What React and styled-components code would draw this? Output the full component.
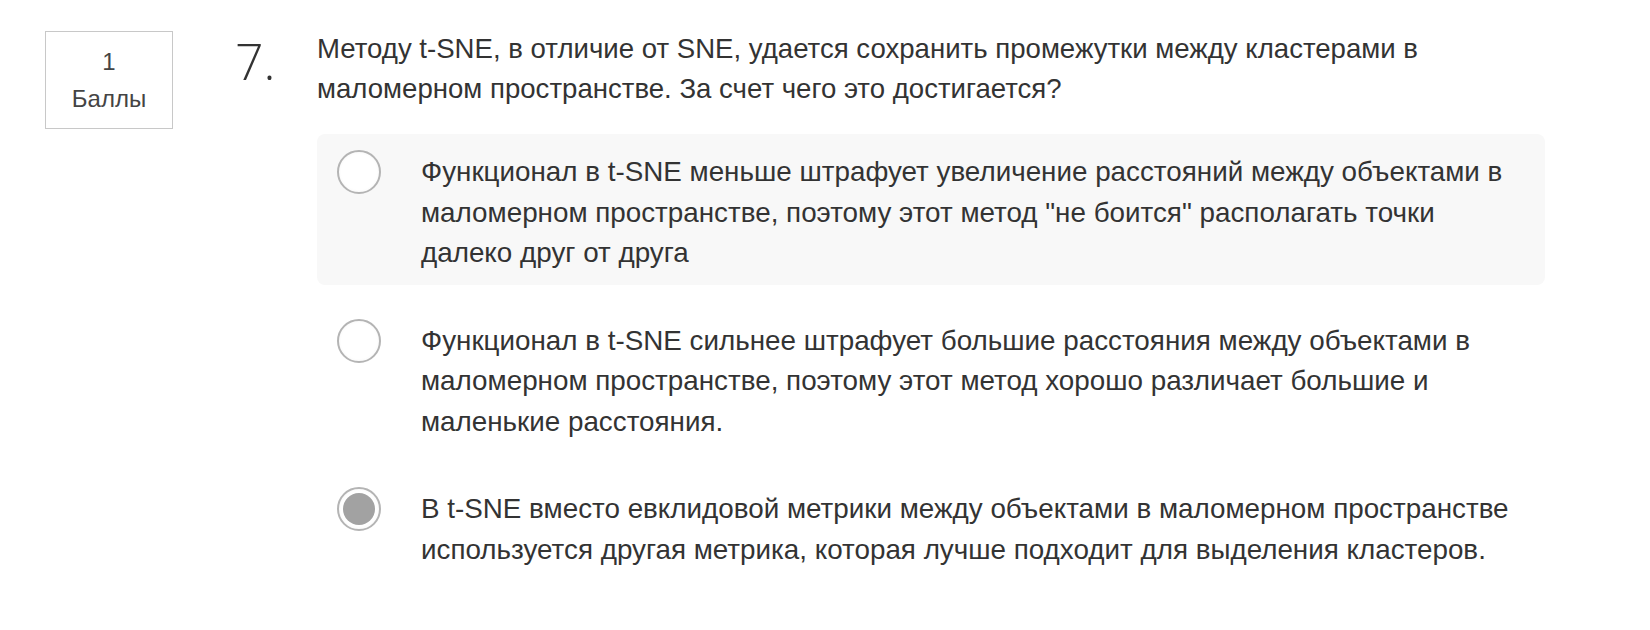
import React from 'react';
import styled, { createGlobalStyle } from 'styled-components';

const ANSWERS = [
  {
    text: <>Функционал в t-SNE меньше штрафует увеличение расстояний между объектами в маломерном пространстве, поэтому этот метод "не боится" располагать точки<br />далеко друг от друга</>,
    hovered: true,
  },
  {
    text: 'Функционал в t-SNE сильнее штрафует большие расстояния между объектами в маломерном пространстве, поэтому этот метод хорошо различает большие и маленькие расстояния.',
  },
  {
    text: 'В t-SNE вместо евклидовой метрики между объектами в маломерном пространстве используется другая метрика, которая лучше подходит для выделения кластеров.',
    checked: true,
  },
];

const App = () => {
  return (
    <>
      <GlobalStyle />
      <Page>
        <PointsBox>
          <span>1</span>
          <span>Баллы</span>
        </PointsBox>
        <Number>7.</Number>
        <Content>
          <Question>
            Методу t-SNE, в отличие от SNE, удается сохранить промежутки между кластерами в маломерном пространстве. За счет чего это достигается?
          </Question>
          <Options>
            {ANSWERS.map(({ text, hovered, checked }, i) => (
              <Option key={i} $hovered={hovered}>
                <Radio $checked={checked} />
                <AnswerText>{text}</AnswerText>
              </Option>
            ))}
          </Options>
        </Content>
      </Page>
    </>
  );
};

export default App;

const GlobalStyle = createGlobalStyle`
  body {
    margin: 0;
    background: #fff;
    font-family: "Liberation Sans", Arial, sans-serif;
    color: #333;
  }
`

const Page = styled.div`
  display: flex;
  align-items: flex-start;
  padding: 31px 0 0 45px;
`

const PointsBox = styled.div`
  flex: none;
  width: 128px;
  height: 98px;
  box-sizing: border-box;
  border: 1px solid #c8c8c8;
  display: flex;
  flex-direction: column;
  align-items: center;
  justify-content: center;
  font-size: 24px;
  line-height: 37px;
  color: #444;
`

const Number = styled.div`
  flex: none;
  width: 81px;
  margin: 5px 0 0 62px;
  font-family: "Open Sans", sans-serif;
  font-weight: 300;
  font-size: 50px;
  line-height: 50px;
  color: #333;
`

const Content = styled.div`
  width: 1228px;
  margin-left: 1px;
`

const Question = styled.p`
  margin: -2px 0 0;
  font-size: 27.6px;
  line-height: 40px;
  color: #333;
`

const Options = styled.div`
  display: flex;
  flex-direction: column;
  gap: 18px;
  margin-top: 25px;
`

const Option = styled.div`
  display: flex;
  align-items: flex-start;
  gap: 40px;
  padding: 15px 20px 11px;
  border-radius: 8px;
  background: ${({ $hovered }) => ($hovered ? '#f8f8f8' : 'transparent')};
`

const Radio = styled.span`
  flex: none;
  position: relative;
  width: 44px;
  height: 44px;
  margin-top: 1px;
  box-sizing: border-box;
  border-radius: 50%;
  border: 2px solid #b4b4b4;
  background: radial-gradient(circle, #fff 62%, #ededed 100%);

  &::after {
    content: '';
    display: ${({ $checked }) => ($checked ? 'block' : 'none')};
    position: absolute;
    top: 4px;
    left: 4px;
    right: 4px;
    bottom: 4px;
    border-radius: 50%;
    background: #a2a2a2;
  }
`

const AnswerText = styled.div`
  flex: 1;
  margin-top: 3px;
  font-size: 27.8px;
  line-height: 40.5px;
  color: #333;
`
